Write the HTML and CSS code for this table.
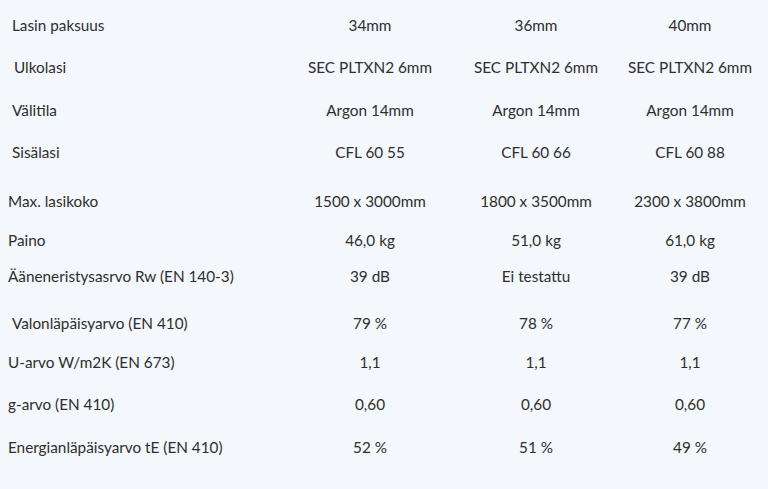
FILE: index.html
```html
<!DOCTYPE html>
<html lang="fi">
<head>
<meta charset="utf-8">
<title>Lasin tekniset tiedot</title>
<link rel="stylesheet" href="styles.css">
</head>
<body>
<div class="specs">
  <div class="row h42"><div class="label indent">Lasin paksuus</div><div class="val">34mm</div><div class="val">36mm</div><div class="val">40mm</div></div>
  <div class="row h43"><div class="label indent2">Ulkolasi</div><div class="val">SEC PLTXN2 6mm</div><div class="val">SEC PLTXN2 6mm</div><div class="val">SEC PLTXN2 6mm</div></div>
  <div class="row h42"><div class="label indent">Välitila</div><div class="val">Argon 14mm</div><div class="val">Argon 14mm</div><div class="val">Argon 14mm</div></div>
  <div class="row h49"><div class="label indent">Sisälasi</div><div class="val">CFL 60 55</div><div class="val">CFL 60 66</div><div class="val">CFL 60 88</div></div>
  <div class="row h39"><div class="label">Max. lasikoko</div><div class="val">1500 x 3000mm</div><div class="val">1800 x 3500mm</div><div class="val">2300 x 3800mm</div></div>
  <div class="row h36"><div class="label">Paino</div><div class="val">46,0 kg</div><div class="val">51,0 kg</div><div class="val">61,0 kg</div></div>
  <div class="row h47"><div class="label">Ääneneristysasrvo Rw (EN 140-3)</div><div class="val">39 dB</div><div class="val">Ei testattu</div><div class="val">39 dB</div></div>
  <div class="row h39"><div class="label indent">Valonläpäisyarvo (EN 410)</div><div class="val">79 %</div><div class="val">78 %</div><div class="val">77 %</div></div>
  <div class="row h42"><div class="label">U-arvo W/m2K (EN 673)</div><div class="val">1,1</div><div class="val">1,1</div><div class="val">1,1</div></div>
  <div class="row h43"><div class="label">g-arvo (EN 410)</div><div class="val">0,60</div><div class="val">0,60</div><div class="val">0,60</div></div>
  <div class="row h42"><div class="label">Energianläpäisyarvo tE (EN 410)</div><div class="val">52 %</div><div class="val">51 %</div><div class="val">49 %</div></div>
</div>
</body>
</html>
```
FILE: styles.css
```css
html, body {
  margin: 0;
  padding: 0;
  background: #f4f7fb;
}
body {
  font-family: Lato, "Noto Sans", sans-serif;
  font-size: 15.3px;
  color: #2e2e2e;
}
.specs {
  padding: 15px 0 0 8px;
  display: flex;
  flex-direction: column;
}
.row {
  display: grid;
  grid-template-columns: 280px 164px 168px 140px;
  align-items: start;
  line-height: 20px;
}
.h36 { height: 36px; }
.h39 { height: 39px; }
.h42 { height: 42px; }
.h43 { height: 43px; }
.h47 { height: 47px; }
.h49 { height: 49px; }
.label { text-align: left; }
.indent { padding-left: 4px; }
.indent2 { padding-left: 6px; }
.val { text-align: center; white-space: nowrap; }
```
